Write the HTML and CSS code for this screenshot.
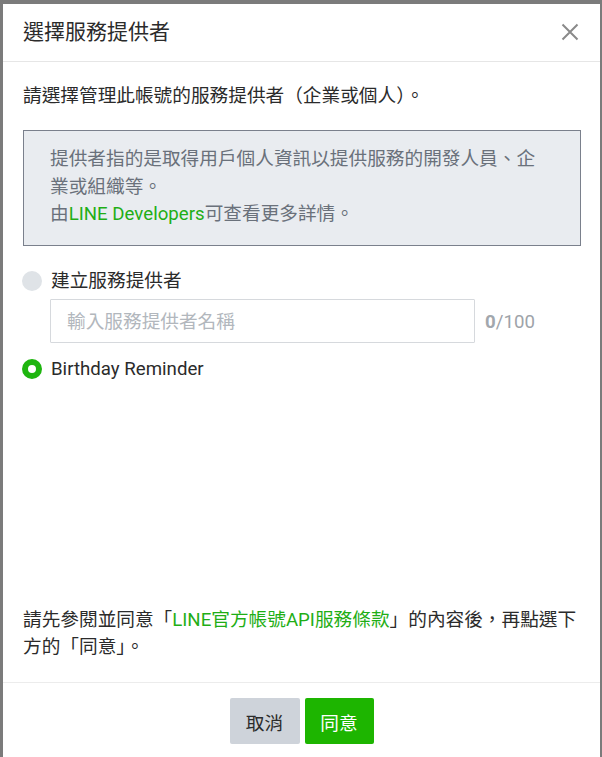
FILE: index.html
```html
<!DOCTYPE html>
<html lang="zh-Hant">
<head>
<meta charset="utf-8">
<title>選擇服務提供者</title>
<link rel="stylesheet" href="styles.css">
</head>
<body>
<div class="backdrop">
  <div class="modal">
    <div class="modal-header">
      <h1 class="modal-title">選擇服務提供者</h1>
      <button class="close-btn" aria-label="關閉">
        <svg width="18" height="18" viewBox="0 0 18 18"><path d="M1.5 1.5 L16.5 16.5 M16.5 1.5 L1.5 16.5" stroke="#8a8a8a" stroke-width="2" fill="none"/></svg>
      </button>
    </div>
    <div class="modal-body">
      <p class="lead">請選擇管理此帳號的服務提供者（企業或個人）。</p>
      <div class="info-box">
        <p>提供者指的是取得用戶個人資訊以提供服務的開發人員、企業或組織等。</p>
        <p>由<a class="link">LINE Developers</a>可查看更多詳情。</p>
      </div>
      <div class="radio-row">
        <span class="radio"></span>
        <span class="radio-label">建立服務提供者</span>
      </div>
      <div class="input-row">
        <div class="text-input">輸入服務提供者名稱</div>
        <span class="counter"><b>0</b>/100</span>
      </div>
      <div class="radio-row second">
        <span class="radio checked"></span>
        <span class="radio-label">Birthday Reminder</span>
      </div>
      <p class="terms">請先參閱並同意「<a class="link">LINE官方帳號API服務條款</a>」的內容後，再點選下方的「同意」。</p>
    </div>
    <div class="modal-footer">
      <button class="btn btn-cancel">取消</button>
      <button class="btn btn-agree">同意</button>
    </div>
  </div>
</div>
</body>
</html>
```

FILE: styles.css
```css
* { box-sizing: border-box; }
html, body {
  margin: 0;
  padding: 0;
  width: 602px;
  height: 757px;
  overflow: hidden;
  background: #7b7b7b;
  font-family: Roboto, "Noto Sans CJK TC", sans-serif;
  color: #2b2b2b;
}
.backdrop {
  padding: 4px 2px 0 3px;
}
.modal {
  background: #fff;
  width: 597px;
  height: 754px;
  display: flex;
  flex-direction: column;
}
.modal-header {
  height: 58px;
  flex: none;
  border-bottom: 1px solid #e6e6e6;
  display: flex;
  align-items: center;
  justify-content: space-between;
  padding: 0 21px 1px 20px;
}
.modal-title {
  margin: 0;
  font-size: 21px;
  font-weight: 400;
  color: #2b2b2b;
  line-height: 28px;
}
.close-btn {
  border: 0;
  background: none;
  padding: 0;
  width: 18px;
  height: 18px;
  display: flex;
}
.modal-body {
  flex: 1;
  display: flex;
  flex-direction: column;
  padding: 21px 19px 21px 20px;
  font-size: 18.67px;
  line-height: 27px;
}
.modal-body p { margin: 0; }
.lead { margin-bottom: 20px !important; }
.info-box {
  background: #e9ecf0;
  border: 1px solid #7a808c;
  padding: 15px 30px 16px 26px;
  color: #6a717b;
  line-height: 27.5px;
}
.link {
  color: #1fae16;
  text-decoration: none;
}
.radio-row {
  display: flex;
  align-items: center;
  gap: 9px;
  margin-top: 22px;
  height: 27px;
}
.radio-row.second { margin-top: 13px; }
.radio {
  width: 20px;
  height: 20px;
  border-radius: 50%;
  background: #dfe3e7;
  flex: none;
  margin-left: -1px;
}
.radio.checked {
  background: #fff;
  border: 6px solid #1eb50f;
}
.radio-label { color: #2b2b2b; }
.input-row {
  display: flex;
  align-items: center;
  gap: 10px;
  margin-top: 4px;
  margin-left: 27px;
}
.text-input {
  width: 425px;
  height: 44px;
  border: 1px solid #d6d9dd;
  border-radius: 1px;
  padding: 3px 0 0 16px;
  display: flex;
  align-items: center;
  color: #b2b7bd;
}
.counter {
  color: #9ea3a9;
  padding-top: 3px;
}
.counter b { font-weight: 700; color: #a2a7ad; }
.terms {
  margin-top: auto !important;
  color: #2b2b2b;
}
.modal-footer {
  border-top: 1px solid #ececec;
  display: flex;
  justify-content: center;
  gap: 5px;
  padding-top: 15px;
  height: 76px;
  flex: none;
}
.btn {
  border: 0;
  height: 46px;
  width: 70px;
  border-radius: 2px;
  font-family: Roboto, "Noto Sans CJK TC", sans-serif;
  font-size: 18.67px;
}
.btn-cancel {
  background: #ced3da;
  color: #2b2b2b;
}
.btn-agree {
  width: 69px;
  background: #1db500;
  color: #fff;
}
```
